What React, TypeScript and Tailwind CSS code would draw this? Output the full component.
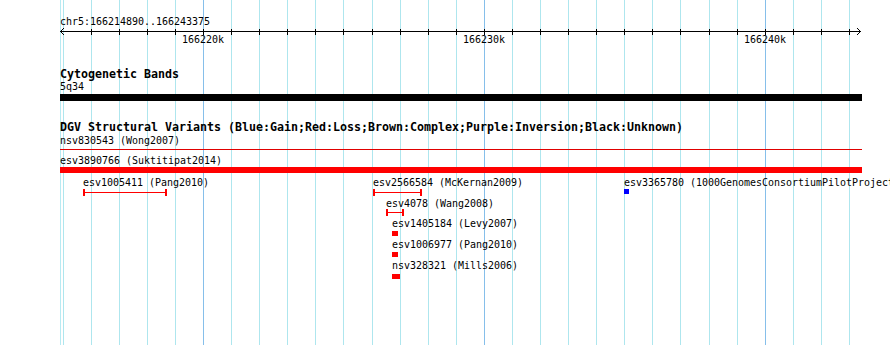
import React from "react";

const START = 166214890;
const END = 166243375;
const LEFT = 60;
const WIDTH = 800;
const px = (pos: number) => LEFT + ((pos - START) / (END - START)) * WIDTH;

const kbs: number[] = [];
for (let k = 166215; k <= 166243; k++) kbs.push(k);

type Feature = {
  label: string;
  x1: number;
  x2: number;
  top: number;
  kind: "interval" | "box";
  color: string;
  glyphTop: number;
  glyphH: number;
};

const TRACK_TOP = 173;

const features: Feature[] = [
  { label: "esv1005411 (Pang2010)", x1: 83, x2: 167, top: 176, kind: "interval", color: "#ff0000", glyphTop: 13, glyphH: 7 },
  { label: "esv2566584 (McKernan2009)", x1: 373, x2: 422, top: 176, kind: "interval", color: "#ff0000", glyphTop: 13, glyphH: 7 },
  { label: "esv3365780 (1000GenomesConsortiumPilotProject)", x1: 624, x2: 629, top: 176, kind: "box", color: "#0000ff", glyphTop: 13, glyphH: 5 },
  { label: "esv4078 (Wang2008)", x1: 386, x2: 404, top: 197, kind: "interval", color: "#ff0000", glyphTop: 12, glyphH: 7 },
  { label: "esv1405184 (Levy2007)", x1: 392, x2: 398, top: 217, kind: "box", color: "#ff0000", glyphTop: 14, glyphH: 5 },
  { label: "esv1006977 (Pang2010)", x1: 392, x2: 398, top: 238, kind: "box", color: "#ff0000", glyphTop: 14, glyphH: 5 },
  { label: "nsv328321 (Mills2006)", x1: 392, x2: 400, top: 259, kind: "box", color: "#ff0000", glyphTop: 15, glyphH: 5 },
];

function Grid() {
  return (
    <svg className="absolute inset-0" width={890} height={345} shapeRendering="crispEdges">
      <line x1={60.5} x2={60.5} y1={0} y2={345} stroke="#b8eaf2" strokeWidth={1} />
      {kbs.map((k) => {
        const x = Math.floor(px(k * 1000)) + 0.5;
        const major = k % 10 === 0;
        return (
          <line
            key={k}
            x1={x}
            x2={x}
            y1={0}
            y2={345}
            stroke={major ? "#86bfea" : "#aee6ee"}
            strokeWidth={1}
          />
        );
      })}
    </svg>
  );
}

function Axis() {
  return (
    <svg className="absolute left-0 top-[24px]" width={890} height={16} shapeRendering="crispEdges">
      <line x1={60} x2={861} y1={7.5} y2={7.5} stroke="#000" strokeWidth={1} />
      <path d="M64 4 L60.5 7.5 L64 11" fill="none" stroke="#000" strokeWidth={1} shapeRendering="auto" />
      <path d="M857 4 L860.5 7.5 L857 11" fill="none" stroke="#000" strokeWidth={1} shapeRendering="auto" />
      {kbs.slice(1).map((k) => {
        const x = Math.floor(px(k * 1000)) + 0.5;
        return <line key={k} x1={x} x2={x} y1={5} y2={11} stroke="#000" strokeWidth={1} />;
      })}
    </svg>
  );
}

function FeatureGlyph({ f }: { f: Feature }) {
  const w = f.x2 - f.x1;
  return (
    <div className="absolute" style={{ left: f.x1, top: f.top - TRACK_TOP }}>
      <div className="h-[13px] leading-[13px] whitespace-nowrap text-black">{f.label}</div>
      {f.kind === "box" ? (
        <div
          className="absolute left-0"
          style={{ top: f.glyphTop, width: w, height: f.glyphH, backgroundColor: f.color }}
        />
      ) : (
        <div className="absolute left-0 flex items-center" style={{ top: f.glyphTop, width: w, height: f.glyphH }}>
          <div className="w-[2px] h-full" style={{ backgroundColor: f.color }} />
          <div className="flex-1 h-[1px]" style={{ backgroundColor: f.color }} />
          <div className="w-[2px] h-full" style={{ backgroundColor: f.color }} />
        </div>
      )}
    </div>
  );
}

export default function App() {
  const majors = [166220, 166230, 166240];
  return (
    <div className="relative w-[890px] h-[345px] overflow-hidden bg-white text-black font-['DejaVu_Sans_Mono',monospace] text-[9.97px]">
      <Grid />
      <div className="relative flex flex-col">
        {/* Ruler */}
        <div className="relative h-[56px]">
          <div className="pl-[60px] pt-[15px] h-[13px] leading-[13px] box-content">chr5:166214890..166243375</div>
          <Axis />
          {majors.map((k) => (
            <div
              key={k}
              className="absolute top-[33px] leading-[13px] w-[60px] text-center"
              style={{ left: Math.floor(px(k * 1000)) - 30 }}
            >
              {k}k
            </div>
          ))}
        </div>

        {/* Cytogenetic Bands */}
        <div className="flex flex-col pt-[12px]">
          <div className="pl-[60px] h-[12px] leading-[13px] font-bold text-[11.63px] whitespace-nowrap">Cytogenetic Bands</div>
          <div className="pl-[60px] h-[13px] leading-[13px]">5q34</div>
          <div className="ml-[60px] mt-[1px] w-[802px] h-[7px] bg-black" />
        </div>

        {/* DGV Structural Variants */}
        <div className="flex flex-col pt-[20px]">
          <div className="pl-[60px] h-[13px] leading-[13px] font-bold text-[11.63px] whitespace-nowrap">
            DGV Structural Variants (Blue:Gain;Red:Loss;Brown:Complex;Purple:Inversion;Black:Unknown)
          </div>
          <div className="pl-[60px] h-[13px] leading-[13px]">nsv830543 (Wong2007)</div>
          <div className="ml-[60px] mt-[2px] w-[802px] h-[1px] bg-[#e00000]" />
          <div className="pl-[60px] mt-[4px] h-[13px] leading-[13px]">esv3890766 (Suktitipat2014)</div>
          <div className="ml-[60px] w-[802px] h-[6px] bg-[#ff0000]" />
          <div className="relative h-[172px]">
            {features.map((f) => (
              <FeatureGlyph key={f.label} f={f} />
            ))}
          </div>
        </div>
      </div>
    </div>
  );
}
